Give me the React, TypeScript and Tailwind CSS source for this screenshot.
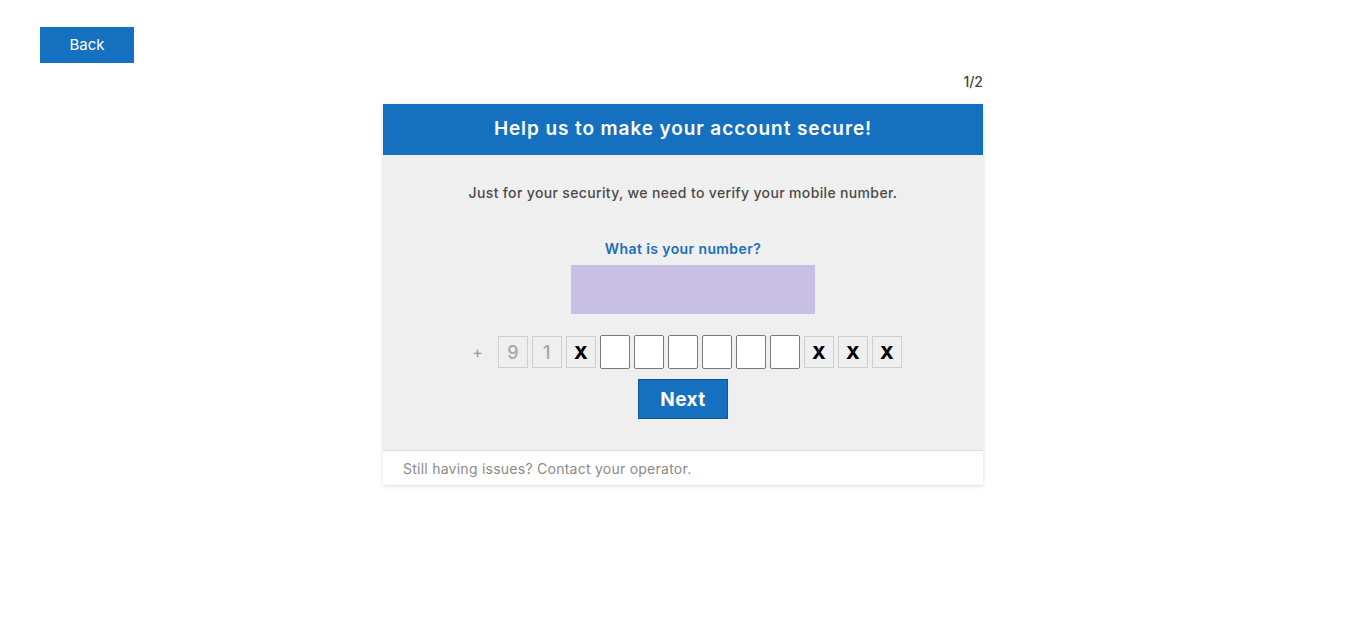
import React from "react";

const prefix = ["9", "1", "X"];
const suffix = ["X", "X", "X"];

function GrayBox({ value }: { value: string }) {
  const isX = value === "X";
  return (
    <div
      className={
        "flex h-[32px] w-[30px] items-center justify-center border border-[#d0d0d0] bg-[#efefef] text-[18px] " +
        (isX ? "font-extrabold text-black" : "font-medium text-[#a6a6a6]")
      }
    >
      {value}
    </div>
  );
}

export default function App() {
  return (
    <div className="min-h-screen bg-white font-['Inter',sans-serif]">
      <div className="px-[40px] pt-[27px]">
        <button
          type="button"
          className="h-[36px] w-[94px] bg-[#1570bf] text-[15px] text-white"
        >
          Back
        </button>
      </div>

      <div className="mx-auto w-[600px]">
        <div className="flex h-[41px] items-center justify-end pb-[4px] text-[14px] font-medium text-[#444]">1/2</div>

        <div className="shadow-[0_1px_4px_rgba(0,0,0,0.15)]">
          <header className="flex h-[51px] items-center justify-center bg-[#1570bf]">
            <h1 className="text-[19px] font-semibold tracking-[0.9px] text-white">Help us to make your account secure!</h1>
          </header>

          <div className="flex h-[295px] flex-col items-center bg-[#efefef]">
            <p className="mt-[27px] text-[14px] font-medium tracking-[0.35px] text-[#4a4a4a]">
              Just for your security, we need to verify your mobile number.
            </p>
            <p className="mt-[35px] text-[14px] font-semibold tracking-[0.4px] text-[#1a6fba]">What is your number?</p>
            <div className="ml-[20px] mt-[6px] h-[49px] w-[244px] bg-[#c8c0e4]" />

            <div className="ml-[8px] mt-[21px] flex items-center gap-[4px]">
              <span className="mr-[11px] text-[16px] text-[#999]">+</span>
              {prefix.map((v, i) => (
                <GrayBox key={"p" + i} value={v} />
              ))}
              {Array.from({ length: 6 }).map((_, i) => (
                <div
                  key={"w" + i}
                  className="h-[34px] w-[30px] rounded-[2px] border border-[#7a7a7a] bg-white"
                />
              ))}
              {suffix.map((v, i) => (
                <GrayBox key={"s" + i} value={v} />
              ))}
            </div>

            <button
              type="button"
              className="mt-[10px] h-[40px] w-[90px] border border-[#10579a] bg-[#1570bf] pt-[2px] text-[19px] font-bold tracking-[0.5px] text-white"
            >
              Next
            </button>
          </div>

          <footer className="flex h-[35px] items-center border-t border-[#dcdcdc] bg-white px-[20px] text-[14px] tracking-[0.25px] text-[#8a8a8a]">
            Still having issues? Contact your operator.
          </footer>
        </div>
      </div>
    </div>
  );
}
